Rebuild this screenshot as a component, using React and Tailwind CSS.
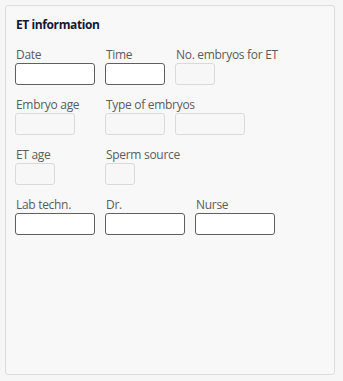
import React from "react";

function Field({ label, width, inputs }) {
  return (
    <div className="flex flex-col" style={{ width }}>
      <div className="h-[16px] text-[12px] leading-[16px] tracking-[-0.3px] text-[#5c5c5c] whitespace-nowrap pl-[1px]">{label}</div>
      <div className="flex gap-[10px]">{inputs}</div>
    </div>
  );
}

const Active = ({ w }) => (
  <div className={`h-[22px] rounded-[3px] border border-[#5f5f5f] bg-white ${w}`} />
);
const Disabled = ({ w }) => (
  <div className={`h-[22px] rounded-[3px] border border-[#dadada] bg-[#f7f7f7] ${w}`} />
);

export default function App() {
  return (
    <div className="w-[343px] h-[381px] bg-[#f6f6f6] p-[5px]" style={{ fontFamily: '"Open Sans", "Noto Sans", sans-serif' }}>
      <div className="w-[330px] h-[370px] rounded-[3px] border border-[#dcdcdc] bg-[#f8f8f8] pl-[9px] pt-[10px]">
        <div className="h-[18px] text-[12px] leading-[18px] tracking-[-0.4px] font-bold text-[#111833] pl-[1px]">ET information</div>
        <div className="mt-[13px] flex flex-col gap-[12px]">
          <div className="flex gap-[10px]">
            <Field label="Date" width="80px" inputs={<Active w="w-[80px]" />} />
            <Field label="Time" width="60px" inputs={<Active w="w-[60px]" />} />
            <Field label="No. embryos for ET" width="40px" inputs={<Disabled w="w-[40px]" />} />
          </div>
          <div className="flex gap-[10px]">
            <Field label="Embryo age" width="80px" inputs={<Disabled w="w-[60px]" />} />
            <Field label="Type of embryos" width="140px" inputs={<><Disabled w="w-[60px]" /><Disabled w="w-[70px]" /></>} />
          </div>
          <div className="flex gap-[10px]">
            <Field label="ET age" width="80px" inputs={<Disabled w="w-[40px]" />} />
            <Field label="Sperm source" width="30px" inputs={<Disabled w="w-[30px]" />} />
          </div>
          <div className="flex gap-[10px]">
            <Field label="Lab techn." width="80px" inputs={<Active w="w-[80px]" />} />
            <Field label="Dr." width="80px" inputs={<Active w="w-[80px]" />} />
            <Field label="Nurse" width="80px" inputs={<Active w="w-[80px]" />} />
          </div>
        </div>
      </div>
    </div>
  );
}
